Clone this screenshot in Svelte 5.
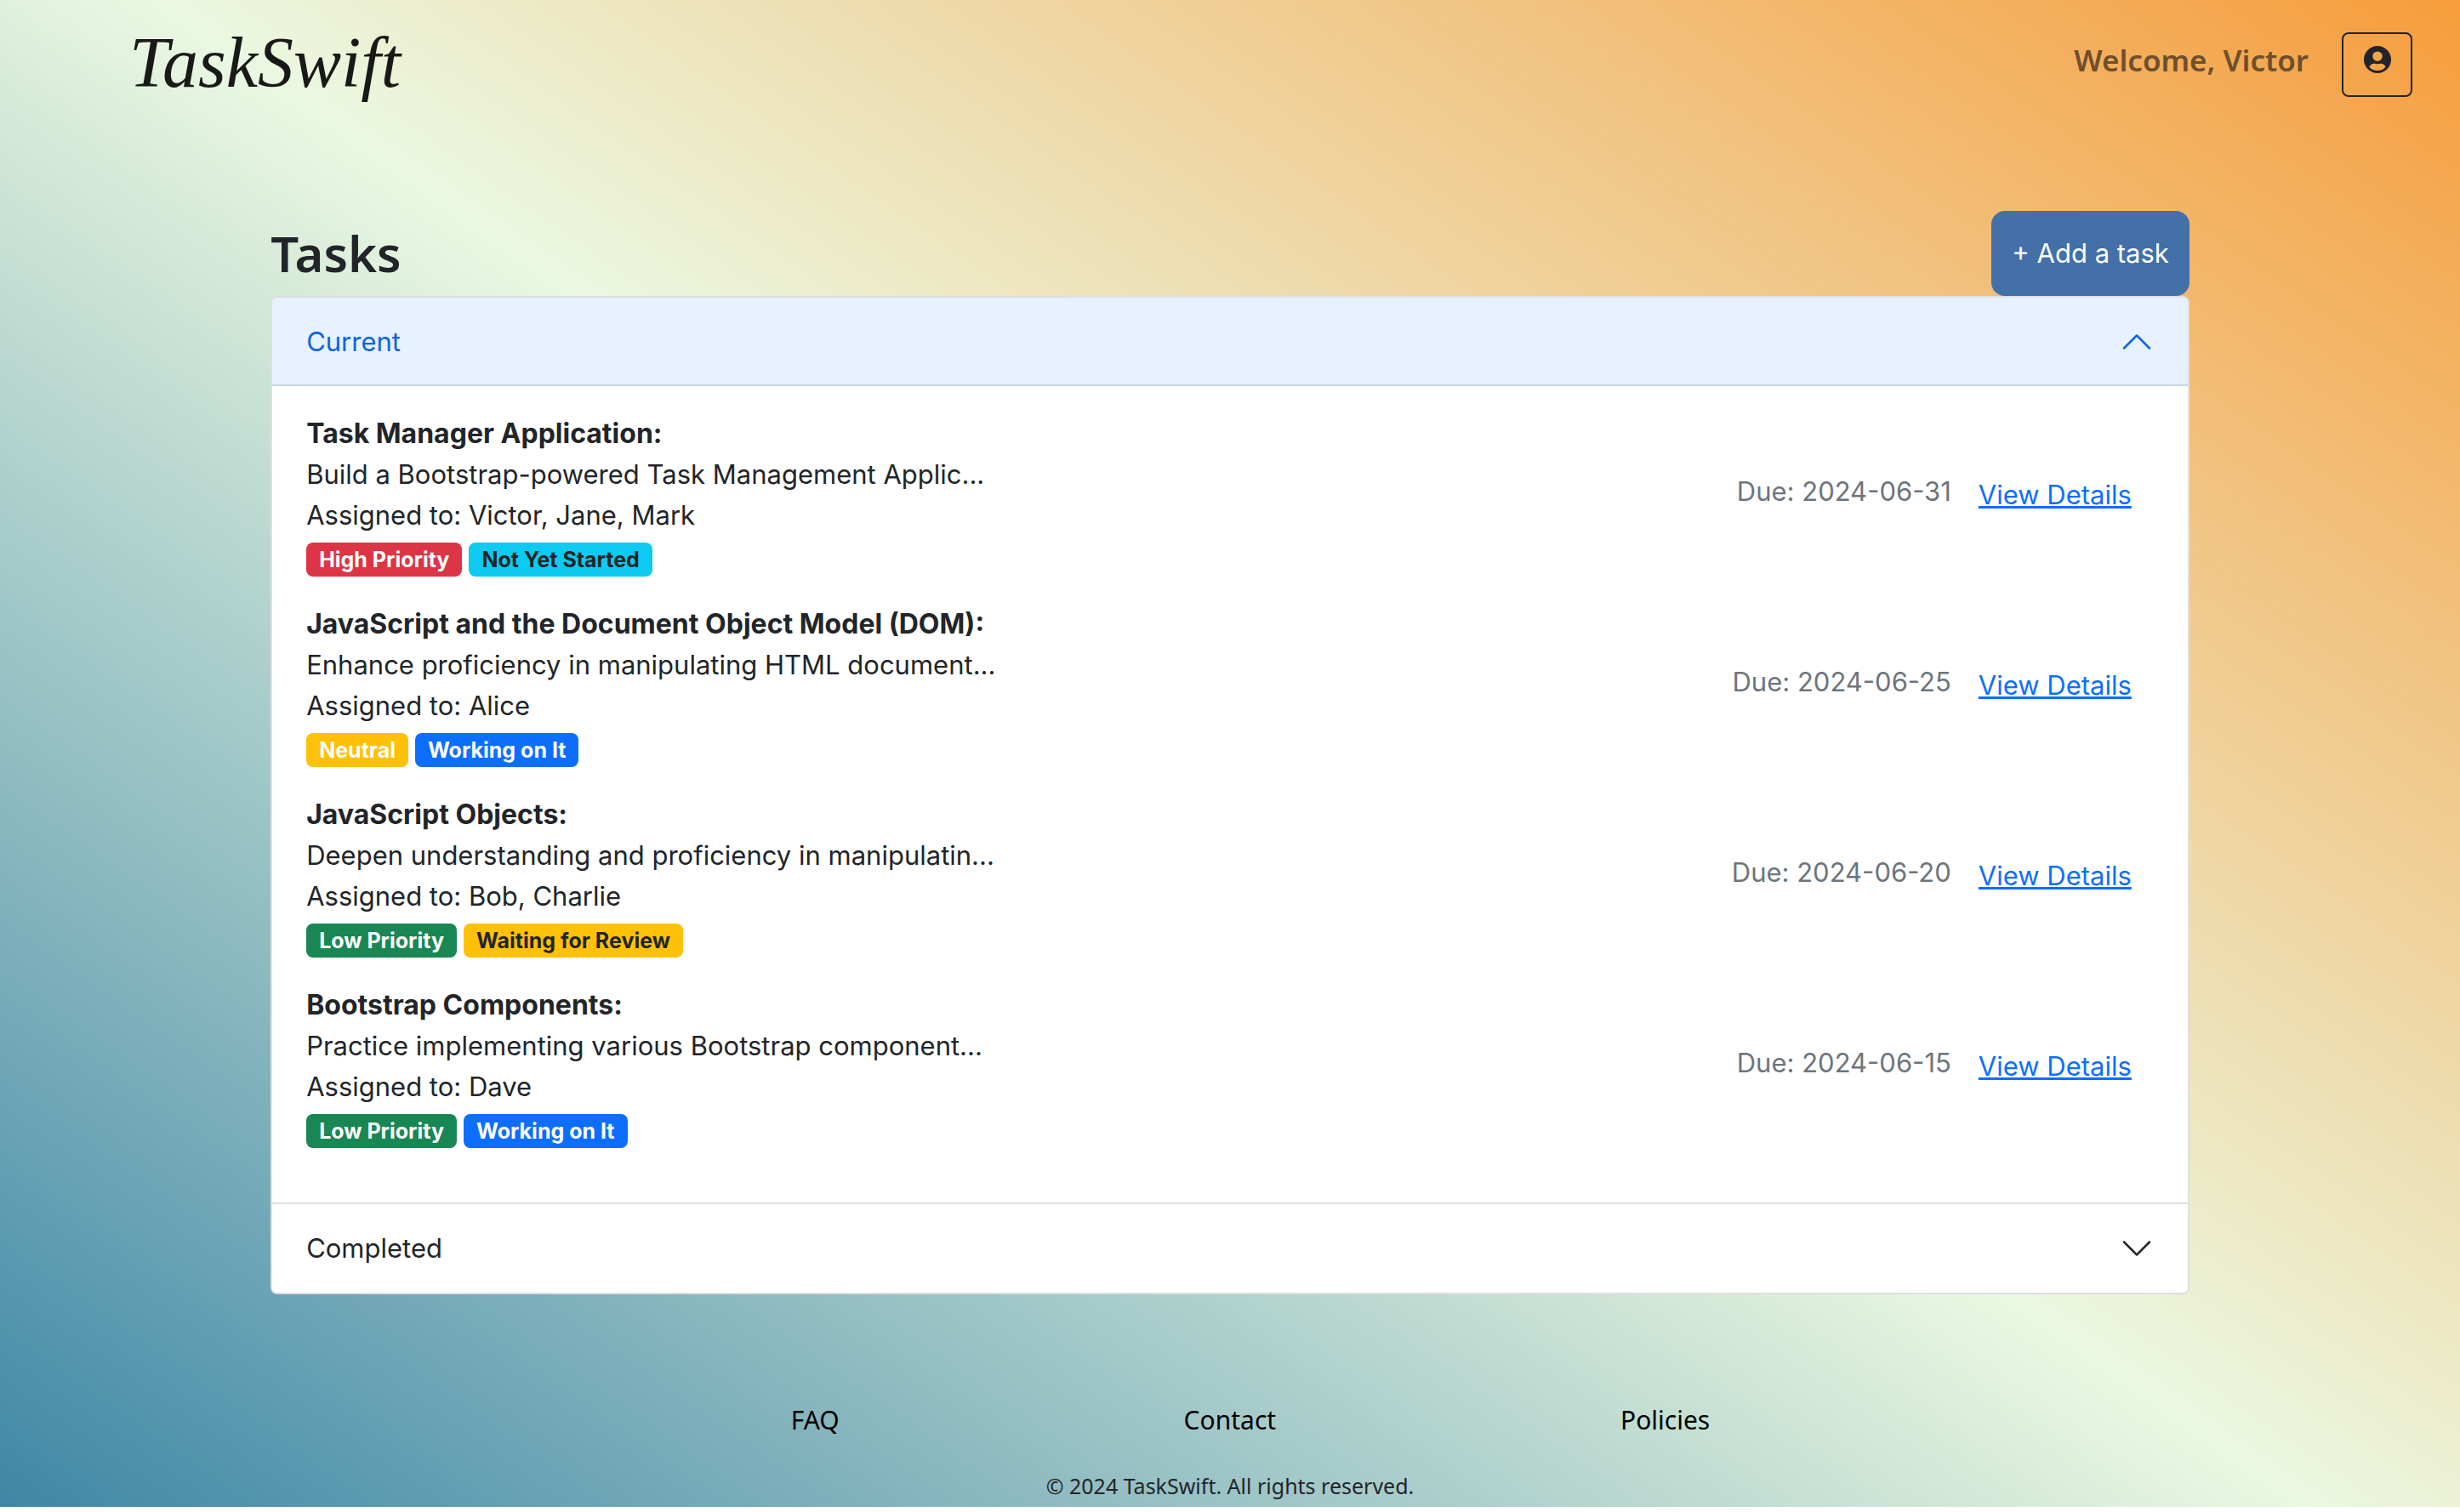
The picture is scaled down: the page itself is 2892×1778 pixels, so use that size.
<script>
  const tasks = [
    { title: 'Task Manager Application:', text: 'Build a Bootstrap-powered Task Management Applic...', people: 'Victor, Jane, Mark', due: '2024-06-31', badges: [['High Priority', 'danger'], ['Not Yet Started', 'cyan']] },
    { title: 'JavaScript and the Document Object Model (DOM):', text: 'Enhance proficiency in manipulating HTML document...', people: 'Alice', due: '2024-06-25', badges: [['Neutral', 'neutral'], ['Working on It', 'primary']] },
    { title: 'JavaScript Objects:', text: 'Deepen understanding and proficiency in manipulatin...', people: 'Bob, Charlie', due: '2024-06-20', badges: [['Low Priority', 'success'], ['Waiting for Review', 'warning']] },
    { title: 'Bootstrap Components:', text: 'Practice implementing various Bootstrap component...', people: 'Dave', due: '2024-06-15', badges: [['Low Priority', 'success'], ['Working on It', 'primary']] }
  ];
  let currentOpen = $state(true);
  let completedOpen = $state(false);
</script>

{#snippet chevron()}
  <svg class="chevron" viewBox="0 0 16 16" fill="currentColor" aria-hidden="true">
    <path fill-rule="evenodd" d="M1.646 4.646a.5.5 0 0 1 .708 0L8 10.293l5.646-5.647a.5.5 0 0 1 .708.708l-6 6a.5.5 0 0 1-.708 0l-6-6a.5.5 0 0 1 0-.708z" />
  </svg>
{/snippet}

<div class="page">
  <header>
    <a class="logo" href="/">TaskSwift</a>
    <div class="account">
      <span class="welcome">Welcome, Victor</span>
      <button class="profile" type="button" aria-label="Account">
        <svg viewBox="0 0 20 20" aria-hidden="true">
          <path fill="currentColor" fill-rule="evenodd" d="M10 0a10 10 0 1 0 0 20 10 10 0 0 0 0-20zm0 4a3.600 3.600 0 1 1 0 7.200 3.600 3.600 0 0 1 0-7.200zm0 14.200c-2.500 0-4.700-1.100-6-2.900.8-1.600 2-2.400 3.400-2.400.8 0 1.500.4 2.600.4s1.800-.4 2.600-.4c1.400 0 2.600.8 3.400 2.400-1.300 1.800-3.500 2.900-6 2.900z" />
        </svg>
      </button>
    </div>
  </header>

  <main>
    <div class="heading">
      <h1>Tasks</h1>
      <button class="add" type="button">+ Add a task</button>
    </div>

    <div class="accordion">
      <section>
        <h2>
          <button class="toggle" class:open={currentOpen} type="button" aria-expanded={currentOpen} onclick={() => (currentOpen = !currentOpen)}>
            Current {@render chevron()}
          </button>
        </h2>
        {#if currentOpen}
          <ul>
            {#each tasks as task}
              <li>
                <div class="info">
                  <strong>{task.title}</strong>
                  <p>{task.text}</p>
                  <p>Assigned to: {task.people}</p>
                  <div class="badges">
                    {#each task.badges as [label, kind]}
                      <span class="badge {kind}">{label}</span>
                    {/each}
                  </div>
                </div>
                <span class="due">Due: {task.due}</span>
                <a class="details" href="#details">View Details</a>
              </li>
            {/each}
          </ul>
        {/if}
      </section>
      <section>
        <h2>
          <button class="toggle" class:open={completedOpen} type="button" aria-expanded={completedOpen} onclick={() => (completedOpen = !completedOpen)}>
            Completed {@render chevron()}
          </button>
        </h2>
      </section>
    </div>
  </main>

  <footer>
    <nav>
      <a href="#faq">FAQ</a>
      <a href="#contact">Contact</a>
      <a href="#policies">Policies</a>
    </nav>
    <p>© 2024 TaskSwift. All rights reserved.</p>
  </footer>
</div>

<style>
  :global(body) {
    background: #fff;
  }
  .page {
    background: linear-gradient(35deg, #3f87a6, #ebf8e1, #f69d3c);
    color: #212529;
    font-family: Inter, "Liberation Sans", sans-serif;
    font-size: 31px;
    line-height: 48px;
    overflow: hidden;
  }
  h1, h2, p, ul {
    margin: 0;
    padding: 0;
    list-style: none;
    font-size: inherit;
    font-weight: 400;
  }
  button {
    font: inherit;
    cursor: pointer;
  }
  header {
    display: flex;
    justify-content: space-between;
    align-items: flex-start;
    height: 248px;
    padding: 0 56px 0 152px;
    box-sizing: border-box;
  }
  .logo {
    padding-top: 26px;
    font: italic 84px/96px "Apple Chancery", "Liberation Serif", serif;
    color: #191a17;
    text-decoration: none;
  }
  .account {
    display: flex;
    align-items: flex-start;
    gap: 39px;
    padding-top: 38px;
  }
  .welcome {
    font: 600 35px/66px "Noto Sans", sans-serif;
    color: #6e4f2d;
  }
  .profile {
    display: flex;
    align-items: flex-start;
    width: 83px;
    height: 76px;
    padding: 14px 24px;
    background: none;
    border: 2px solid #212529;
    border-radius: 8px;
    color: #212529;
  }
  .profile svg {
    width: 32px;
    height: 32px;
    flex: none;
  }
  main {
    width: 78%;
    margin: 0 auto;
  }
  .heading {
    display: flex;
    justify-content: space-between;
    align-items: center;
  }
  h1 {
    font: 600 58px/64px "Noto Sans", sans-serif;
  }
  .add {
    height: 100px;
    padding: 0 24px;
    border: 0;
    border-radius: 16px;
    background: #4370a8;
    color: #fff;
  }
  .accordion {
    border: 2px solid #dfdfdf;
    border-radius: 8px;
    background: #fff;
    overflow: hidden;
  }
  section + section {
    border-top: 2px solid #dfdfdf;
  }
  .toggle {
    display: flex;
    justify-content: space-between;
    align-items: center;
    width: 100%;
    height: 104px;
    padding: 0 40px;
    border: 0;
    background: #fff;
    color: #212529;
  }
  .toggle.open {
    background: #e7f1ff;
    color: #0c63e4;
    box-shadow: inset 0 -2px 0 #c9d3e2;
  }
  .chevron {
    width: 40px;
    height: 40px;
  }
  .open .chevron {
    transform: rotate(180deg);
  }
  ul {
    padding: 32px 40px;
  }
  li {
    display: flex;
    align-items: center;
    margin-bottom: 32px;
  }
  .info {
    flex: 1;
  }
  strong {
    display: block;
    font-size: 32px;
    font-weight: 700;
  }
  .badges {
    display: flex;
    align-items: flex-end;
    gap: 8px;
    height: 48px;
  }
  .badge {
    padding: 8px 15px;
    border-radius: 8px;
    font-size: 25px;
    font-weight: 700;
    line-height: 24px;
    color: #fff;
  }
  .danger { background: #dc3545; }
  .cyan { background: #0dcaf0; color: #212529; }
  .neutral { background: #ffc107; }
  .warning { background: #ffc107; color: #212529; }
  .primary { background: #0d6efd; }
  .success { background: #198754; }
  .due {
    margin: 0 8px 8px 0;
    color: #6c757d;
  }
  .details {
    padding: 14px 26px 14px 24px;
    color: #0d6efd;
    text-decoration: underline;
    text-decoration-thickness: 3px;
  }
  footer {
    padding-top: 124px;
    font-family: "Noto Sans", sans-serif;
    text-align: center;
  }
  nav {
    display: flex;
    justify-content: center;
    gap: 14vw;
    padding-left: 48px;
    font-size: 30px;
  }
  nav a {
    color: #000;
    text-decoration: none;
  }
  footer p {
    padding: 29px 0 1px;
    font-size: 25px;
  }
</style>
